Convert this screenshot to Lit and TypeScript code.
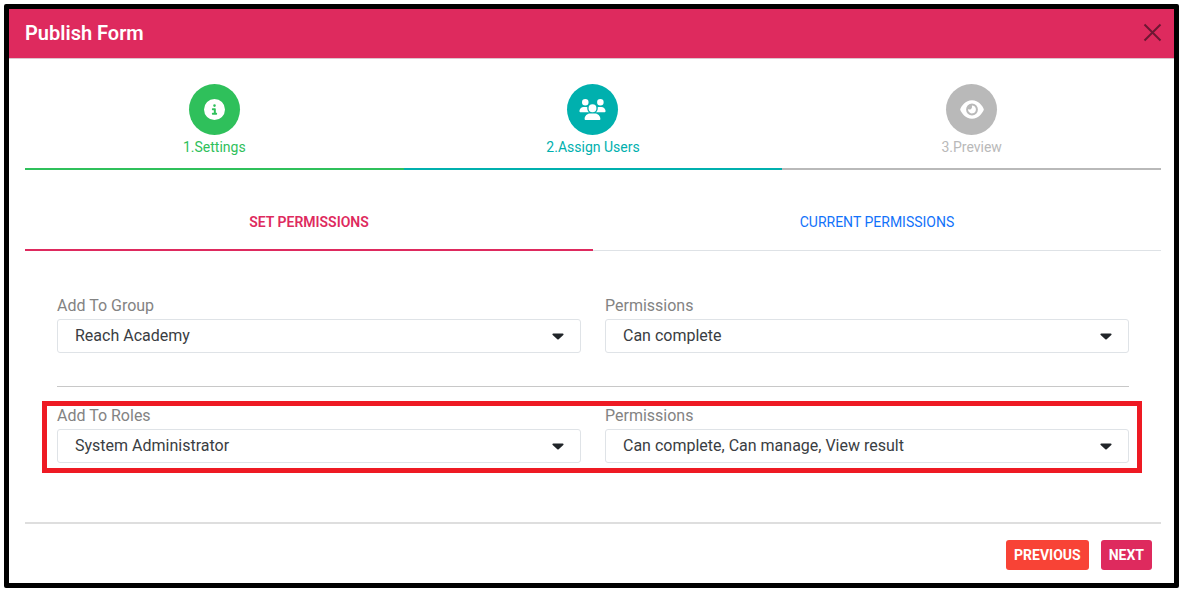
import { LitElement, html, css, svg } from "lit";
import { customElement, property, state } from "lit/decorators.js";
import { classMap } from "lit/directives/class-map.js";

const icons = {
  info: svg`<svg class="icon info" viewBox="0 0 512 512" aria-hidden="true"><path d="M256 512A256 256 0 1 0 256 0a256 256 0 1 0 0 512zM216 336h24V272H216c-13.3 0-24-10.7-24-24s10.7-24 24-24h48c13.3 0 24 10.7 24 24v88h8c13.3 0 24 10.7 24 24s-10.7 24-24 24H216c-13.3 0-24-10.7-24-24s10.7-24 24-24zm40-208a32 32 0 1 1 0 64 32 32 0 1 1 0-64z"/></svg>`,
  users: svg`<svg class="icon users" viewBox="0 0 640 512" aria-hidden="true"><path d="M144 0a80 80 0 1 1 0 160A80 80 0 1 1 144 0zM512 0a80 80 0 1 1 0 160A80 80 0 1 1 512 0zM0 298.7C0 239.8 47.8 192 106.7 192h42.7c15.9 0 31 3.5 44.6 9.7c-1.3 7.2-1.9 14.7-1.9 22.3c0 38.2 16.8 72.5 43.3 96c-.2 0-.4 0-.7 0H21.3C9.6 320 0 310.4 0 298.7zM405.3 320c-.2 0-.4 0-.7 0c26.6-23.5 43.3-57.8 43.3-96c0-7.6-.7-15-1.9-22.3c13.6-6.3 28.7-9.7 44.6-9.7h42.7C592.2 192 640 239.8 640 298.7c0 11.8-9.6 21.3-21.3 21.3H405.3zM224 224a96 96 0 1 1 192 0 96 96 0 1 1 -192 0zM128 485.3C128 411.7 187.7 352 261.3 352H378.7C452.3 352 512 411.7 512 485.3c0 14.7-11.9 26.7-26.7 26.7H154.7c-14.7 0-26.7-11.9-26.7-26.7z"/></svg>`,
  eye: svg`<svg class="icon eye" viewBox="0 0 576 512" aria-hidden="true"><path d="M288 32c-80.8 0-145.5 36.8-192.6 80.6C48.6 156 17.3 208 2.5 243.7c-3.3 7.9-3.3 16.7 0 24.6C17.3 304 48.6 356 95.4 399.4C142.5 443.2 207.2 480 288 480s145.5-36.8 192.6-80.6c46.8-43.5 78.1-95.4 93-131.1c3.3-7.9 3.3-16.7 0-24.6c-14.9-35.7-46.2-87.7-93-131.1C433.5 68.8 368.8 32 288 32zM144 256a144 144 0 1 1 288 0 144 144 0 1 1 -288 0zm144-64c0 35.3-28.7 64-64 64c-7.1 0-13.9-1.2-20.3-3.3c-5.5-1.8-11.9 1.6-11.7 7.4c.3 6.9 1.3 13.8 3.2 20.7c13.7 51.2 66.4 81.6 117.6 67.9s81.6-66.4 67.9-117.6c-11.1-41.5-47.8-69.4-88.6-71.1c-5.8-.2-9.2 6.1-7.4 11.7c2.1 6.4 3.3 13.2 3.3 20.3z"/></svg>`,
};

/** A labelled drop-down. */
@customElement("select-field")
class SelectField extends LitElement {
  @property() label = "";
  @property({ type: Array }) options: string[] = [];

  static styles = css`
    :host { display: block; min-width: 0; }
    .field { display: grid; gap: 3px; }
    .label { font-size: 16px; line-height: 20px; color: #838383; }
    .box { display: grid; align-items: center; }
    .control {
      grid-area: 1 / 1;
      appearance: none;
      box-sizing: border-box;
      width: 100%;
      height: 34px;
      margin: 0;
      padding: 0 40px 0 17px;
      border: 1px solid #dfe3e7;
      border-radius: 3px;
      background: #fff;
      color: #3a3d42;
      font: 16px/20px Roboto, sans-serif;
    }
    .caret {
      grid-area: 1 / 1;
      justify-self: end;
      width: 12px;
      height: 7px;
      margin-right: 17px;
      fill: #212529;
      pointer-events: none;
    }
  `;

  render() {
    return html`
      <div class="field">
        <label class="label" for="control">${this.label}</label>
        <div class="box">
          <select class="control" id="control">
            ${this.options.map((o) => html`<option>${o}</option>`)}
          </select>
          <svg class="caret" viewBox="0 0 12 7" aria-hidden="true">
            <path d="M1.3 0.5H10.7C11.6 0.5 11.9 1.3 11.3 1.9L6.7 6.3C6.3 6.7 5.7 6.7 5.3 6.3L0.7 1.9C0.1 1.3 0.4 0.5 1.3 0.5Z"/>
          </svg>
        </div>
      </div>
    `;
  }
}

const steps = [
  { name: "1.Settings", tone: "done", icon: icons.info },
  { name: "2.Assign Users", tone: "current", icon: icons.users },
  { name: "3.Preview", tone: "pending", icon: icons.eye },
];

@customElement("app-root")
class AppRoot extends LitElement {
  @state() private tab = 0;

  static styles = css`
    :host {
      display: block;
      padding: 4px 3px 3px 4px;
      background: #fff;
      font-family: Roboto, sans-serif;
    }
    .dialog { border: 5px solid #000; border-radius: 2px; background: #fff; }
    .header {
      display: flex;
      align-items: flex-start;
      justify-content: space-between;
      padding: 12px 12px 13px 16px;
      border-bottom: 1px solid #dcc5cc;
      background: #de2a5e;
    }
    .title { margin: 0; color: #fff; font-size: 20px; line-height: 24px; font-weight: 600; }
    .close { display: flex; padding: 2px 0; border: 0; background: none; cursor: pointer; }
    .cross { width: 19px; height: 19px; fill: none; stroke: #6d1733; stroke-width: 2; }
    .content { padding: 25px 13px 13px 16px; }

    .steps { display: grid; grid-template-columns: repeat(3, 1fr); margin: 0; padding: 0; list-style: none; }
    .step {
      display: flex;
      flex-direction: column;
      align-items: center;
      gap: 2px;
      padding-bottom: 11px;
      border-bottom: 2px solid currentColor;
      font-size: 14px;
      line-height: 20px;
    }
    .done { color: #2fc05b; }
    .current { color: #00b0ae; }
    .pending { color: #b9b9b9; }
    .disc {
      display: grid;
      place-items: center;
      width: 51px;
      height: 51px;
      border-radius: 50%;
      background: currentColor;
    }
    .icon { display: block; height: 21px; fill: #fff; }
    .info { width: 21px; }
    .users { width: 27px; }
    .eye { width: 24px; }

    .tabs { display: grid; grid-template-columns: 1fr 1fr; }
    .tab {
      height: 81px;
      padding: 24px 0 0;
      border: 0;
      border-bottom: 2px solid transparent;
      background: linear-gradient(#dee2e6, #dee2e6) bottom / 100% 1px no-repeat border-box;
      color: #1272fa;
      font: 14px/20px Roboto, sans-serif;
      text-transform: uppercase;
      cursor: pointer;
    }
    .selected { border-bottom-color: #de2a5e; color: #de2a5e; font-weight: 600; }

    .form { padding: 45px 32px 49px; }
    .pair { display: grid; grid-template-columns: 1fr 1fr; gap: 24px; }
    .rule { height: 0; margin: 33px 0 14px; border: 0; border-top: 1px solid #c8c8c8; }
    .marked { margin: 0 -13px 0 -15px; padding: 0 8px 5px 10px; border: 5px solid #ee1a23; }

    .footer {
      display: flex;
      justify-content: flex-end;
      gap: 12px;
      padding: 16px 9px 0 0;
      border-top: 2px solid #dedede;
    }
    .action {
      height: 30px;
      padding: 0 8px;
      border: 0;
      border-radius: 3px;
      color: #fff;
      font: 700 14px/20px Roboto, sans-serif;
      text-transform: uppercase;
      cursor: pointer;
    }
    .previous { background: #f84336; }
    .next { background: #de2a5e; }
  `;

  render() {
    return html`
      <main class="dialog">
        <header class="header">
          <h1 class="title">Publish Form</h1>
          <button class="close" aria-label="Close">
            <svg class="cross" viewBox="0 0 19 19" aria-hidden="true"><path d="M1.5 1.5L17.5 17.5M17.5 1.5L1.5 17.5"/></svg>
          </button>
        </header>
        <div class="content">
          <ol class="steps">
            ${steps.map((s) => html`
              <li class="step ${s.tone}"><span class="disc">${s.icon}</span>${s.name}</li>
            `)}
          </ol>
          <div class="tabs" role="tablist">
            ${["Set Permissions", "Current Permissions"].map((name, i) => html`
              <button
                role="tab"
                aria-selected=${this.tab === i ? "true" : "false"}
                class=${classMap({ tab: true, selected: this.tab === i })}
                @click=${() => (this.tab = i)}
              >${name}</button>
            `)}
          </div>
          <form class="form">
            <div class="pair">
              <select-field label="Add To Group" .options=${["Reach Academy"]}></select-field>
              <select-field label="Permissions" .options=${["Can complete"]}></select-field>
            </div>
            <hr class="rule" />
            <div class="pair marked">
              <select-field label="Add To Roles" .options=${["System Administrator"]}></select-field>
              <select-field label="Permissions" .options=${["Can complete, Can manage, View result"]}></select-field>
            </div>
          </form>
          <footer class="footer">
            <button class="action previous">Previous</button>
            <button class="action next">Next</button>
          </footer>
        </div>
      </main>
    `;
  }
}
